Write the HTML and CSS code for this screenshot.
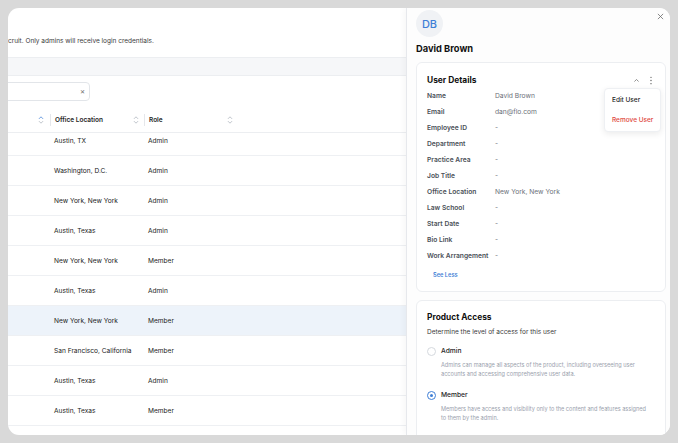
FILE: index.html
```html
<!DOCTYPE html>
<html lang="en">
<head>
  <meta charset="UTF-8" />
  <meta name="viewport" content="width=device-width, initial-scale=1.0"/>
  <title>Users - David Brown</title>
  <link rel="stylesheet" href="styles.css">
</head>
<body>

<div class="window">
  <section class="page">
    <div class="page-top">
      <p class="subtitle">cruit. Only admins will receive login credentials.</p>
    </div>
    <div class="band"></div>

    <div class="toolbar">
      <div class="search">
        <span class="search-x">&#x2715;</span>
      </div>
    </div>

    <div class="table">
      <div class="thead">
        <div class="th th-first">
          <svg class="sort" viewBox="0 0 6 10" width="6" height="10"><path d="M1.2 3.6 3 1.8 4.8 3.6" class="active"/><path d="M1.2 6.4 3 8.2 4.8 6.4"/></svg>
        </div>
        <div class="th">
          <span>Office Location</span>
          <svg class="sort" viewBox="0 0 6 10" width="6" height="10"><path d="M1.2 3.6 3 1.8 4.8 3.6"/><path d="M1.2 6.4 3 8.2 4.8 6.4"/></svg>
        </div>
        <div class="th">
          <span>Role</span>
          <svg class="sort" viewBox="0 0 6 10" width="6" height="10"><path d="M1.2 3.6 3 1.8 4.8 3.6"/><path d="M1.2 6.4 3 8.2 4.8 6.4"/></svg>
        </div>
      </div>
      <div class="tbody" id="rows"></div>
    </div>
  </section>

  <aside class="drawer">
    <div class="drawer-head">
      <div class="avatar">DB</div>
      <button class="close" aria-label="Close">
        <svg viewBox="0 0 8 8" width="7" height="7"><path d="M1 1 7 7M7 1 1 7"/></svg>
      </button>
    </div>
    <h2 class="user-name">David Brown</h2>

    <div class="card details">
      <div class="card-head">
        <h3>User Details</h3>
        <div class="card-tools">
          <svg class="chev" viewBox="0 0 8 6" width="7" height="5"><path d="M1.5 4.2 4 1.8 6.5 4.2"/></svg>
          <svg class="kebab" viewBox="0 0 4 10" width="4" height="9"><circle cx="2" cy="1.5" r="0.8"/><circle cx="2" cy="5" r="0.8"/><circle cx="2" cy="8.5" r="0.8"/></svg>
        </div>
      </div>
      <dl class="fields" id="fields"></dl>
      <a class="see-less" href="#">See Less</a>

      <div class="menu">
        <div class="menu-item">Edit User</div>
        <div class="menu-item danger">Remove User</div>
      </div>
    </div>

    <div class="card access">
      <h3>Product Access</h3>
      <p class="access-sub">Determine the level of access for this user</p>

      <label class="option">
        <span class="radio"></span>
        <span class="option-label">Admin</span>
      </label>
      <p class="option-desc">Admins can manage all aspects of the product, including overseeing user accounts and accessing comprehensive user data.</p>

      <label class="option">
        <span class="radio checked"></span>
        <span class="option-label">Member</span>
      </label>
      <p class="option-desc">Members have access and visibility only to the content and features assigned to them by the admin.</p>
    </div>
  </aside>
</div>

<script>
  const usuarios = [
    ["Austin, TX", "Admin"],
    ["Washington, D.C.", "Admin"],
    ["New York, New York", "Admin"],
    ["Austin, Texas", "Admin"],
    ["New York, New York", "Member"],
    ["Austin, Texas", "Admin"],
    ["New York, New York", "Member", true],
    ["San Francisco, California", "Member"],
    ["Austin, Texas", "Admin"],
    ["Austin, Texas", "Member"]
  ];

  const rows = document.getElementById("rows");
  usuarios.forEach(u => {
    const row = document.createElement("div");
    row.className = "tr" + (u[2] ? " selected" : "");
    row.innerHTML = `<div class="td td-first"></div><div class="td">${u[0]}</div><div class="td">${u[1]}</div>`;
    rows.appendChild(row);
  });

  const detalles = [
    ["Name", "David Brown"],
    ["Email", "dan@flo.com"],
    ["Employee ID", "-"],
    ["Department", "-"],
    ["Practice Area", "-"],
    ["Job Title", "-"],
    ["Office Location", "New York, New York"],
    ["Law School", "-"],
    ["Start Date", "-"],
    ["Bio Link", "-"],
    ["Work Arrangement", "-"]
  ];

  const fields = document.getElementById("fields");
  detalles.forEach(d => {
    const row = document.createElement("div");
    row.className = "field";
    row.innerHTML = `<dt>${d[0]}</dt><dd>${d[1]}</dd>`;
    fields.appendChild(row);
  });
</script>

</body>
</html>
```

FILE: styles.css
```css
* {
  box-sizing: border-box;
}
body {
  font-family: Inter, "Noto Sans", sans-serif;
  background-color: #d9d9d9;
  margin: 0;
  padding: 8px;
  color: #262626;
}
h2, h3, p, dl, dd {
  margin: 0;
}

.window {
  width: 662px;
  height: 427px;
  background: white;
  border-radius: 11px;
  overflow: hidden;
  display: flex;
}

/* main page, scrolled so only part is visible */
.page {
  width: 398px;
  flex: none;
  overflow: hidden;
  display: flex;
  flex-direction: column;
}
.page-top {
  height: 49px;
  padding-top: 28px;
}
.subtitle {
  font-size: 6.5px;
  line-height: 10px;
  color: #3a3a3a;
  white-space: nowrap;
}
.band {
  height: 19px;
  background-color: #f6f7f9;
  border-top: 1px solid #eceef1;
  border-bottom: 1px solid #eceef1;
}
.toolbar {
  padding-top: 6px;
}
.search {
  width: 100px;
  height: 19px;
  margin-left: -18px;
  border: 1px solid #e2e5e9;
  border-radius: 4px;
  display: flex;
  align-items: center;
  justify-content: flex-end;
  padding-right: 4px;
}
.search-x {
  font-size: 6px;
  color: #6b6b6b;
}

.table {
  margin-top: 8px;
}
.thead {
  display: flex;
  align-items: center;
  height: 24px;
  border-bottom: 1px solid #eceef1;
  padding-bottom: 1px;
}
.th {
  width: 94px;
  height: 12px;
  display: flex;
  align-items: center;
  justify-content: space-between;
  padding: 0 5px 0 4px;
  border-left: 1px solid #e5e7eb;
  font-size: 6.5px;
  font-weight: 600;
  color: #262626;
}
.th-first {
  width: 42px;
  border-left: none;
  justify-content: flex-end;
  padding-right: 6px;
}
.sort path {
  fill: none;
  stroke: #b0b6bf;
  stroke-width: 0.8;
  stroke-linecap: round;
  stroke-linejoin: round;
}
.sort path.active {
  stroke: #4a86d8;
}
.tbody {
  height: 300px;
  overflow: hidden;
}
.tr {
  display: flex;
  align-items: center;
  height: 30px;
  border-bottom: 1px solid #eef0f3;
  font-size: 6.6px;
  color: #222222;
}
.tr:first-child {
  margin-top: -7px;
}
.tr.selected {
  background-color: #edf3fa;
}
.td {
  width: 94px;
  padding-left: 4px;
}
.td-first {
  width: 42px;
}

/* side drawer */
.drawer {
  flex: 1;
  border-left: 1px solid #e6e8ec;
  box-shadow: -2px 0 6px rgba(0,0,0,0.04);
  background-color: #fdfdfd;
  padding: 2px 4px 0 9px;
  overflow: hidden;
}
.drawer-head {
  display: flex;
  justify-content: space-between;
  align-items: flex-start;
}
.avatar {
  width: 27px;
  height: 27px;
  border-radius: 50%;
  background-color: #f0f2f5;
  color: #3f7fd6;
  font-size: 11px;
  font-weight: 500;
  display: flex;
  align-items: center;
  justify-content: center;
}
.close {
  border: none;
  background: none;
  padding: 0;
  margin: 2px 2px 0 0;
  width: 8px;
  height: 8px;
  display: flex;
  align-items: center;
  justify-content: center;
}
.close path {
  stroke: #6b6b6b;
  stroke-width: 0.9;
}
.user-name {
  font-size: 9.3px;
  font-weight: 700;
  line-height: 14px;
  margin-top: 5px;
  color: #111111;
}

.card {
  background: white;
  border: 1px solid #eceef1;
  border-radius: 6px;
  padding: 11px 10px 0 10px;
}
.card h3 {
  font-size: 8.4px;
  font-weight: 700;
  line-height: 12px;
  color: #111111;
}
.details {
  position: relative;
  margin-top: 6px;
  height: 230px;
}
.card-head {
  display: flex;
  justify-content: space-between;
  align-items: center;
}
.card-tools {
  display: flex;
  align-items: center;
  gap: 9px;
  margin-right: 2px;
}
.chev path {
  fill: none;
  stroke: #6b6b6b;
  stroke-width: 0.9;
}
.kebab circle {
  fill: #6b6b6b;
}
.fields {
  margin-top: 2px;
}
.field {
  display: flex;
  height: 16px;
  align-items: center;
  font-size: 6.7px;
}
.field dt {
  width: 68px;
  font-weight: 600;
  color: #4a4f57;
}
.field dd {
  color: #6b7079;
}
.see-less {
  display: block;
  margin: 6px 0 0 6px;
  font-size: 5.7px;
  font-weight: 600;
  line-height: 10px;
  color: #3f7fd6;
  text-decoration: none;
}

.menu {
  position: absolute;
  left: 187px;
  top: 25px;
  width: 57px;
  padding: 1px 0;
  background: white;
  border: 1px solid #eef0f3;
  border-radius: 4px;
  box-shadow: 0 2px 6px rgba(0,0,0,0.08);
}
.menu-item {
  height: 20px;
  line-height: 20px;
  padding-left: 7px;
  font-size: 6.5px;
  font-weight: 500;
  color: #262626;
}
.menu-item.danger {
  color: #e0483e;
}

.access {
  margin-top: 8px;
  height: 150px;
  padding-top: 10px;
}
.access-sub {
  margin-top: 4px;
  font-size: 6.5px;
  line-height: 10px;
  color: #3a3a3a;
}
.option {
  display: flex;
  align-items: center;
  gap: 5px;
  margin-top: 8px;
  height: 12px;
}
.option-desc + .option {
  margin-top: 10px;
}
.radio {
  width: 9px;
  height: 9px;
  border-radius: 50%;
  border: 1px solid #d5d9de;
  background: white;
  display: flex;
  align-items: center;
  justify-content: center;
}
.radio.checked {
  border-color: #3f7fd6;
}
.radio.checked::after {
  content: "";
  width: 3px;
  height: 3px;
  border-radius: 50%;
  background-color: #3f7fd6;
}
.option-label {
  font-size: 6.7px;
  font-weight: 500;
  color: #262626;
}
.option-desc {
  margin: 4px 0 0 14px;
  font-size: 5.6px;
  line-height: 9px;
  color: #9aa1ad;
  padding-right: 8px;
}
```
